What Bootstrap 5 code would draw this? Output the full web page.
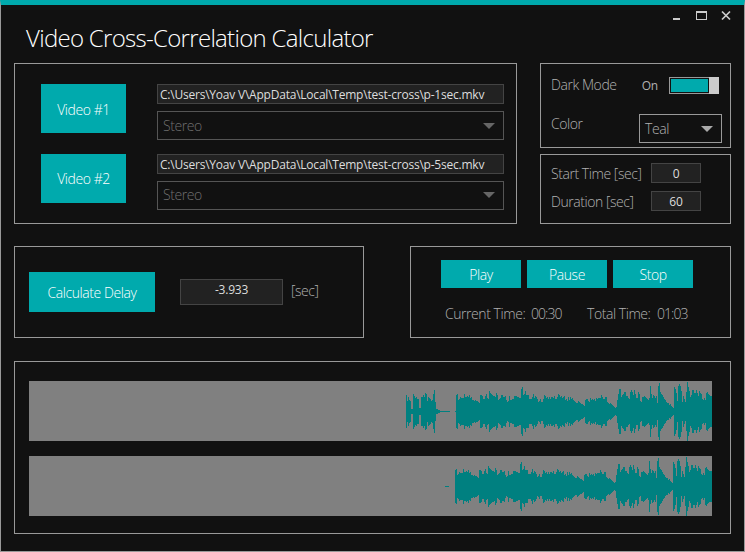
<!DOCTYPE html>
<html lang="en">
<head>
<meta charset="utf-8">
<meta name="viewport" content="width=device-width, initial-scale=1">
<title>Video Cross-Correlation Calculator</title>
<link href="https://cdn.jsdelivr.net/npm/bootstrap@5.3.0/dist/css/bootstrap.min.css" rel="stylesheet">
<style>
:root{--teal:#00aaad;--line:#999}
body{width:745px;height:552px;background:#111;overflow:hidden;color:#b2b2b2;font:300 14px/20px "Open Sans","Noto Sans",sans-serif;letter-spacing:-.44px}
.app{width:745px;height:552px;border:1px solid var(--line);border-top:5px solid var(--teal);padding:0 13px}
.titlebar{height:58px;padding:18px 0 0 12px}
.titlebar h1{font-size:24px;line-height:30px;font-weight:300;color:#fff;letter-spacing:-.7px;margin:0}
.wincontrols{margin-top:-18px;margin-right:-1px}
.panel{border:1px solid var(--line)}
.files{width:503px;height:161px;padding:20px 12px 0 26px}
.file-row{height:70px}
.side{width:191px}
.theme-box{height:85px;padding:13px 8px 0 10px}
.range-box{height:70px;padding:8px 29px 0 10px}
.calc{width:350px;height:92px;padding:25px 0 0 14px}
.player{width:321px;height:92px;padding:13px 0 0 30px}
.waves{height:173px;padding:19px 14px 0;gap:15px;margin-top:23px}
.tbtn{background:var(--teal);color:#fff;border:0;border-radius:0;padding:2px 0 0;font:inherit;letter-spacing:-.44px;line-height:20px}
.tbtn:hover{background:var(--teal);color:#fff}
.tbtn.file{width:85px;height:49px}
.tbtn.delay{width:126px;height:40px}
.tbtn.play{width:80px;height:28px}
.field{background:#222;border:1px solid #444;color:#ddd;height:20px;font-size:12px;line-height:19px;font-weight:400;white-space:nowrap;letter-spacing:-.22px}
.path{width:347px;padding-left:2px}
.num{width:50px;text-align:center}
.result{width:103px;height:26px;line-height:20px;text-align:center}
.combo{border:1px solid #555;color:#707070;height:29px;padding:0 8px 0 5px}
.file-row .combo{margin-top:7px}
.combo.live{width:83px;border-color:var(--line);color:#b2b2b2}
.toggle-track{width:40px;height:17px;border:1px solid var(--line);border-right:0;padding:1px}
.toggle-fill{background:var(--teal);height:13px;width:37px}
.toggle-thumb{width:10px;height:17px;background:#ccc;margin-right:3px}
.wave{display:block;width:683px;height:60px;background:#808080}
.t{display:inline-block;white-space:nowrap}
.clock{letter-spacing:-.95px}
</style>
</head>
<body>
<main class="app d-flex flex-column">
  <header class="titlebar d-flex justify-content-between align-items-start">
    <h1><span class="t">Video Cross-Correlation Calculator</span></h1>
    <svg class="wincontrols" width="64" height="20" shape-rendering="crispEdges" fill="none">
      <path d="M5 14h7" stroke="#ccc" stroke-width="2"/>
      <path d="M28 7h11M28 14.500h11M28.500 6v9M38.500 6v9" stroke="#ccc"/><path d="M28 7h11" stroke="#ccc" stroke-width="2"/>
      <path d="M54 6.500l8 8M62 6.500l-8 8" stroke="#ccc" stroke-width="1.700" shape-rendering="auto"/>
    </svg>
  </header>

  <div class="d-flex justify-content-between">
    <section class="panel files d-flex flex-column">
      <div class="file-row d-flex justify-content-between">
        <button class="btn tbtn file"><span class="t">Video #1</span></button>
        <div>
          <div class="field path"><span class="t">C:\Users\Yoav V\AppData\Local\Temp\test-cross\p-1sec.mkv</span></div>
          <div class="combo d-flex align-items-center justify-content-between"><span class="t">Stereo</span><svg width="12" height="6"><path d="M0 0h12l-6 6z" fill="#666"/></svg></div>
        </div>
      </div>
      <div class="file-row d-flex justify-content-between">
        <button class="btn tbtn file"><span class="t">Video #2</span></button>
        <div>
          <div class="field path"><span class="t">C:\Users\Yoav V\AppData\Local\Temp\test-cross\p-5sec.mkv</span></div>
          <div class="combo d-flex align-items-center justify-content-between"><span class="t">Stereo</span><svg width="12" height="6"><path d="M0 0h12l-6 6z" fill="#666"/></svg></div>
        </div>
      </div>
    </section>

    <div class="side d-flex flex-column justify-content-between">
      <section class="panel theme-box">
        <div class="d-flex align-items-start">
          <span class="t" style="margin-top:-2px">Dark Mode</span>
          <span class="t ms-auto" style="font-size:12px;font-weight:400;letter-spacing:-.17px;margin:-1px 11px 0 0">On</span>
          <div class="toggle-track"><div class="toggle-fill"></div></div><div class="toggle-thumb"></div>
        </div>
        <div class="d-flex align-items-start justify-content-between" style="margin-top:18px">
          <span class="t">Color</span>
          <div class="combo live d-flex align-items-center justify-content-between"><span class="t">Teal</span><svg width="12" height="6"><path d="M0 0h12l-6 6z" fill="#aaa"/></svg></div>
        </div>
      </section>
      <section class="panel range-box">
        <div class="d-flex justify-content-between" style="height:28px"><span class="t" style="padding-top:1px">Start Time [sec]</span><div class="field num">0</div></div>
        <div class="d-flex justify-content-between"><span class="t" style="padding-top:1px">Duration [sec]</span><div class="field num">60</div></div>
      </section>
    </div>
  </div>

  <div class="d-flex justify-content-between" style="margin-top:22px">
    <section class="panel calc d-flex align-items-start">
      <button class="btn tbtn delay"><span class="t">Calculate Delay</span></button>
      <div class="field result" style="margin:7px 8px 0 25px"><span class="t">-3.933</span></div>
      <span class="t" style="margin-top:9px">[sec]</span>
    </section>
    <section class="panel player">
      <div class="d-flex" style="gap:6px">
        <button class="btn tbtn play">Play</button>
        <button class="btn tbtn play">Pause</button>
        <button class="btn tbtn play">Stop</button>
      </div>
      <div class="d-flex" style="margin:16px 0 0 4px">
        <span class="t" style="width:86px">Current Time:</span>
        <span class="t clock" style="width:56px">00:30</span>
        <span class="t" style="width:70px">Total Time:</span>
        <span class="t clock">01:03</span>
      </div>
    </section>
  </div>

  <section class="panel waves d-flex flex-column">
    <svg class="wave" id="wave1" shape-rendering="crispEdges"></svg>
    <svg class="wave" id="wave2" shape-rendering="crispEdges"></svg>
  </section>
</main>
<script src="https://cdn.jsdelivr.net/npm/bootstrap@5.3.0/dist/js/bootstrap.bundle.min.js"></script>
<script>
// Peak height of each one-pixel column, in pixels from the centre line
const intro = [16,10,14,11,10,2,2,17,15,13,14,12,12,3,3,14,14,16,14,18,17,10,14,13,12,10,11,17,21,9,2,2,1,1];
const body = [16,17,11,12,14,13,13,13,17,14,14,15,14,16,13,14,11,11,10,11,10,10,9,8,16,16,15,12,12,15,17,13,12,20,18,17,16,15,15,14,18,16,11,12,
13,16,16,14,14,15,11,9,10,15,11,11,12,12,15,15,15,14,14,13,13,22,24,16,17,20,16,16,16,12,12,12,14,17,13,15,14,12,9,10,12,9,9,12,16,15,13,14,12,14,12,14,14,13,15,12,12,14,17,16,14,15,13,14,15,11,12,10,14,11,14,12,13,11,10,9,8,8,10,9,8,7,7,6,5,11,12,12,10,9,13,11,12,11,12,10,13,12,13,13,13,16,14,12,12,
14,14,9,8,7,8,7,6,5,4,3,4,11,17,22,22,14,16,17,19,19,15,15,13,12,19,21,19,16,21,17,13,13,19,17,10,9,14,14,15,14,13,12,11,13,25,17,13,16,15,13,15,8,25,28,19,17,16,14,12,11,9,8,8,6,7,5,4,3,24,22,18,10,25,27,25,20,9,15,12,9,19,29,24,20,14,16,21,21,18,18,21,18,15,20,18,17,12,11,13,11,18,19,17,16,15,15];
const bars = (list, x) => list.map((h, i) => `M${x + i} ${30 - h}h1v${2 * h + 1}h-1z`).join('');
const draw = (id, d) => document.getElementById(id).innerHTML = `<path fill="#008080" d="${d}"/>`;
draw('wave1', bars(intro, 377) + 'M411 30h10v1h-10zM426 30h1v1h-1z' + bars(body, 427));
draw('wave2', 'M416 30h4v1h-4z' + bars(body, 426) + bars([15], 682));
</script>
</body>
</html>
